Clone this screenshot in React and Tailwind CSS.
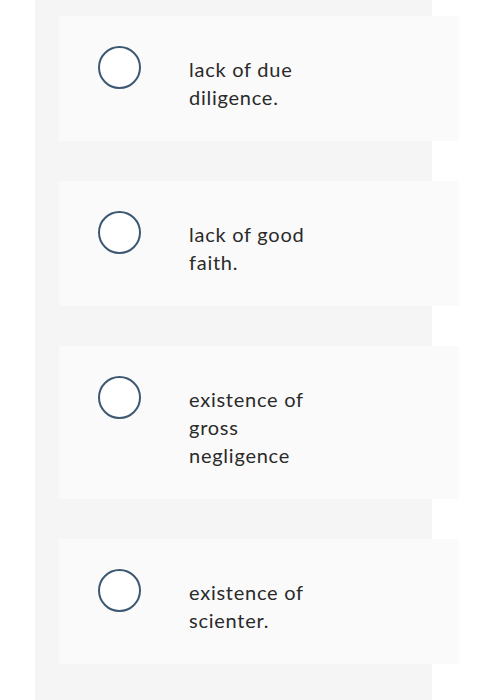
import React from "react";

const options = [
  "lack of due diligence.",
  "lack of good faith.",
  "existence of gross negligence",
  "existence of scienter.",
];

export default function App() {
  return (
    <div className="min-h-[700px] w-[504px] bg-white" style={{ fontFamily: "Lato, 'Noto Sans', sans-serif" }}>
      <div className="ml-[35px] w-[397px] min-h-[700px] bg-[#f5f5f5] pt-[16px] flex flex-col gap-[40px]">
        {options.map((t) => (
          <div key={t} className="ml-[24px] w-[400px] bg-[#fafafa] rounded-[2px] flex pt-[30px] pb-[29px] pl-[39px]">
            <div className="w-[43px] h-[43px] shrink-0 rounded-full border-2 border-[#3d5873] bg-white" />
            <div className="ml-[48px] mt-[9px] mb-[1px] w-[140px] text-[20px] leading-[28px] tracking-[0.75px] text-[#2a2a2a]">{t}</div>
          </div>
        ))}
      </div>
    </div>
  );
}
